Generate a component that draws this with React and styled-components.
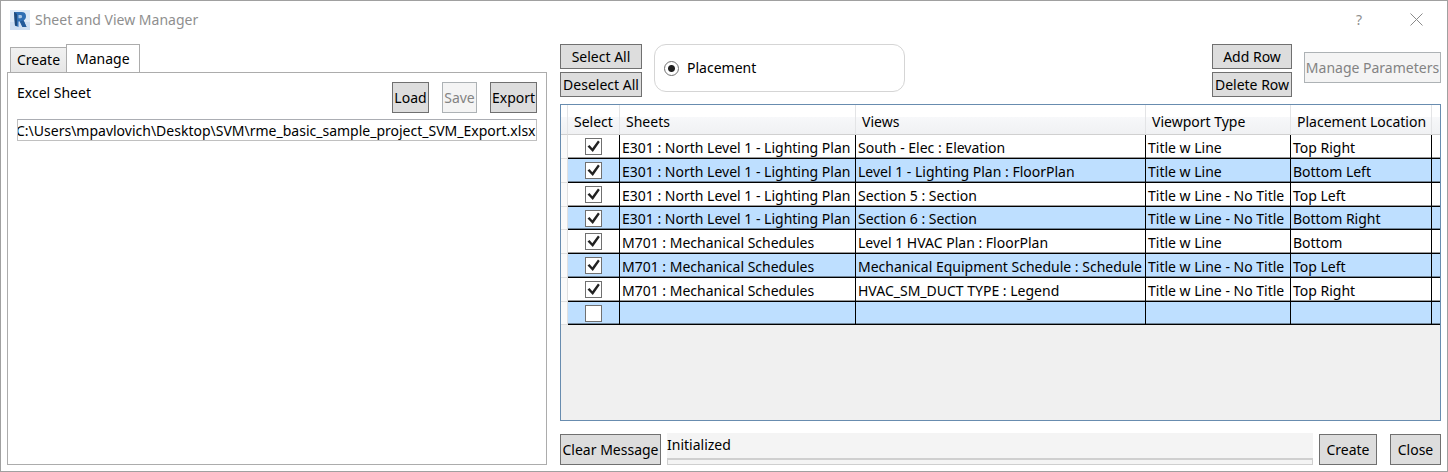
import React, { useLayoutEffect, useRef, useState } from 'react';
import styled, { createGlobalStyle, css } from 'styled-components';

const GlobalStyle = createGlobalStyle`
  *, *::before, *::after { box-sizing: border-box; }
  body {
    margin: 0;
    background: #fff;
    color: #000;
    font: 14px/20px "Noto Sans", "Open Sans", sans-serif;
  }
  button, input { font: inherit; color: inherit; }
`;

const Window = styled.div`
  display: flex;
  flex-direction: column;
  min-height: 100vh;
  border: 1px solid #a0a0a0;
  background: #fff;
`;

const TitleBar = styled.header`
  display: flex;
  align-items: center;
  height: 37px;
  padding: 0 9px;
  color: #8f8f8f;
`;

const AppIcon = styled.svg`
  width: 20px;
  height: 20px;
  margin-right: 5px;
`;

const Title = styled.h1`
  flex: 1;
  margin: 0;
  font-size: 14px;
  font-weight: 400;
`;

const CaptionButton = styled.button`
  display: grid;
  place-items: center;
  width: 44px;
  height: 28px;
  margin-left: 13px;
  padding: 0;
  border: 0;
  background: none;
`;

const Main = styled.main`
  flex: 1;
  display: grid;
  grid-template-columns: minmax(0, 540fr) minmax(0, 881fr);
  gap: 13px;
  padding: 6px;
`;

const Column = styled.section`
  display: flex;
  flex-direction: column;
  min-width: 0;
`;

const TabList = styled.div`
  display: flex;
  align-items: flex-end;
  height: 29px;
  padding-left: 3px;
`;

const Tab = styled.button`
  height: 26px;
  padding: 0 6px;
  border: 1px solid #acacac;
  border-width: 1px 0 1px 1px;
  background: linear-gradient(#f1f1f1, #e6e6e6);
  line-height: 22px;
  ${(p) => p.$active && css`
    height: 29px;
    padding: 0 9px;
    border-width: 1px 1px 0;
    background: #fff;
  `}
`;

const TabPanel = styled.div`
  flex: 1;
  display: flex;
  flex-direction: column;
  gap: 6px;
  margin-top: -1px;
  padding: 9px;
  border: 1px solid #acacac;
`;

const PanelHeader = styled.div`
  display: flex;
  align-items: flex-start;
  gap: 13px;
`;

const FieldLabel = styled.label`
  flex: 1;
  line-height: 22px;
`;

const Button = styled.button`
  height: ${(p) => (p.$compact ? 25 : 31)}px;
  min-width: ${(p) => p.$width}px;
  padding: 1px 0 0;
  border: 1px solid #707070;
  background: #ddd;
  line-height: 20px;
  white-space: nowrap;
  &:disabled {
    border-color: #adb2b5;
    background: #f4f4f4;
    color: #838383;
  }
`;

const PathInput = styled.input`
  width: 100%;
  height: 22px;
  padding: 0;
  border: 1px solid #c0c0c0;
  border-top-color: #abadb3;
  background: #fff;
  outline: 0;
`;

const Toolbar = styled.div`
  display: flex;
  align-items: flex-start;
  gap: 12px;
  margin-bottom: 7px;
`;

const ButtonStack = styled.div`
  display: flex;
  flex-direction: column;
  gap: 3px;
`;

const ModeGroup = styled.div`
  display: flex;
  align-items: center;
  width: 251px;
  height: 48px;
  margin-right: auto;
  padding: 0 9px;
  border: 1px solid #d5d5d5;
  border-radius: 12px;
`;

const RadioLabel = styled.label`
  display: flex;
  align-items: center;
  gap: 8px;
`;

const Radio = styled.input`
  appearance: none;
  width: 15px;
  height: 15px;
  margin: 0;
  border: 1px solid #707070;
  border-radius: 50%;
  background: #fff;
  &:checked {
    background: radial-gradient(circle, #212121 3px, #fff 4px);
  }
`;

const Centered = styled.div`
  padding-top: 8px;
`;

const GridFrame = styled.div`
  flex: 1;
  margin-bottom: 12px;
  border: 1px solid #688caf;
  background: #f0f0f0;
  overflow: hidden;
`;

const Table = styled.table`
  width: 100%;
  table-layout: fixed;
  border-collapse: separate;
  border-spacing: 0;
`;

const Col = styled.col`
  width: ${(p) => (p.$width ? `${p.$width}px` : 'auto')};
`;

const HeadCell = styled.th`
  height: 30px;
  padding: 4px 6px 0;
  border-right: 1px solid #e3e4e6;
  border-bottom: 1px solid #d0d0d0;
  background: linear-gradient(#fff 0 40%, #f7f8fa 40%, #f0f1f3);
  font-weight: 400;
  text-align: left;
  white-space: nowrap;
  &:last-child { border-right: 0; }
`;

const Row = styled.tr`
  height: 24px;
  background: ${(p) => (p.$alternate ? '#bedfff' : '#fff')};
  &:nth-child(4n) { height: 23px; }
`;

const RowHeader = styled.td`
  padding: 0;
  border-right: 1px solid #e0e0e0;
  border-bottom: 1px solid #e0e0e0;
  background: #fafafa;
`;

const Cell = styled.td`
  padding: ${(p) => (p.$check ? '0' : '2px 0 0 2px')};
  border-right: 1px solid #000;
  border-bottom: 1px solid #000;
  box-shadow: inset 0 -1px rgba(0, 0, 0, 0.4);
  line-height: 20px;
  overflow: hidden;
  white-space: nowrap;
  &:last-child { border-right: 0; }
`;

const CheckHolder = styled.div`
  display: flex;
  justify-content: center;
`;

const CheckBox = styled.input`
  appearance: none;
  width: 17px;
  height: 17px;
  margin: 0;
  border: 1px solid #707070;
  background: #fff;
  grid-area: 1 / 1;
`;

const CheckLabel = styled.label`
  display: grid;
  place-items: center;
`;

const CheckMark = styled.svg`
  grid-area: 1 / 1;
  width: 17px;
  height: 17px;
  pointer-events: none;
`;

const Footer = styled.footer`
  display: flex;
  align-items: flex-end;
  gap: 6px;
`;

const Status = styled.div`
  flex: 1;
  display: flex;
  flex-direction: column;
  justify-content: space-between;
  height: 32px;
  background: #f4f4f4;
  line-height: 24px;
`;

const ProgressTrack = styled.div`
  height: 7px;
  border: 1px solid #cfcfcf;
  border-top-width: 2px;
  background: #f4f4f4;
`;

const FooterActions = styled.div`
  display: flex;
  gap: 13px;
`;

const initialRows = [
  ['E301 : North Level 1 - Lighting Plan', 'South - Elec : Elevation', 'Title w Line', 'Top Right'],
  ['E301 : North Level 1 - Lighting Plan', 'Level 1 - Lighting Plan : FloorPlan', 'Title w Line', 'Bottom Left'],
  ['E301 : North Level 1 - Lighting Plan', 'Section 5 : Section', 'Title w Line - No Title', 'Top Left'],
  ['E301 : North Level 1 - Lighting Plan', 'Section 6 : Section', 'Title w Line - No Title', 'Bottom Right'],
  ['M701 : Mechanical Schedules', 'Level 1 HVAC Plan : FloorPlan', 'Title w Line', 'Bottom'],
  ['M701 : Mechanical Schedules', 'Mechanical Equipment Schedule : Schedule', 'Title w Line - No Title', 'Top Left'],
  ['M701 : Mechanical Schedules', 'HVAC_SM_DUCT TYPE : Legend', 'Title w Line - No Title', 'Top Right'],
  ['', '', '', ''],
];

function RowCheck({ checked, onChange, label }) {
  return (
    <CheckHolder>
      <CheckLabel>
        <CheckBox type="checkbox" checked={checked} onChange={onChange} aria-label={label} />
        {checked && (
          <CheckMark viewBox="0 0 17 17" aria-hidden="true">
            <path d="M2.500 8.600 4.500 7l2.800 3.200L13 2.600l1.800 1.300-7 10.100z" fill="#212121" />
          </CheckMark>
        )}
      </CheckLabel>
    </CheckHolder>
  );
}

export default function App() {
  const [checks, setChecks] = useState(initialRows.map((r) => r[0] !== ''));
  const pathRef = useRef(null);

  useLayoutEffect(() => {
    pathRef.current.scrollLeft = pathRef.current.scrollWidth;
  }, []);

  const toggle = (i) => setChecks(checks.map((c, n) => (n === i ? !c : c)));

  return (
    <>
      <GlobalStyle />
      <Window>
        <TitleBar>
          <AppIcon viewBox="0 0 20 20" aria-hidden="true">
            <rect width="20" height="20" fill="#dde9f7" />
            <path d="M0 12h20v8H0z" fill="#cfdff2" />
            <path d="M4 2h7.500c3 0 4.500 1.600 4.500 4.200 0 2-.9 3.400-2.400 4L16.500 17h-4L9.800 11.500H8.500V17L5 15.500z" fill="#2f6fb5" />
            <path d="M8.500 5v3.200h2c1 0 1.600-.6 1.600-1.600S11.500 5 10.500 5z" fill="#a9c6e6" />
            <path d="M4 2l3 2v12.300l-2-.8z" fill="#1f4a7c" />
            <path d="M9.800 11.500l3.800-1.300L16.500 17h-4z" fill="#235a99" />
          </AppIcon>
          <Title>Sheet and View Manager</Title>
          <CaptionButton type="button">?</CaptionButton>
          <CaptionButton type="button" aria-label="Close window">
            <svg width="13" height="13" viewBox="0 0 13 13" aria-hidden="true">
              <path d="M.5.5l12 12M12.500.5l-12 12" stroke="#8a8a8a" fill="none" />
            </svg>
          </CaptionButton>
        </TitleBar>
        <Main>
          <Column>
            <TabList role="tablist">
              <Tab type="button" role="tab" aria-selected="false">Create</Tab>
              <Tab type="button" role="tab" aria-selected="true" $active>Manage</Tab>
            </TabList>
            <TabPanel role="tabpanel">
              <PanelHeader>
                <FieldLabel htmlFor="excel-path">Excel Sheet</FieldLabel>
                <Button type="button" $width={37}>Load</Button>
                <Button type="button" $width={35} disabled>Save</Button>
                <Button type="button" $width={47}>Export</Button>
              </PanelHeader>
              <PathInput
                id="excel-path"
                ref={pathRef}
                defaultValue="C:\Users\mpavlovich\Desktop\SVM\rme_basic_sample_project_SVM_Export.xlsx"
              />
            </TabPanel>
          </Column>
          <Column>
            <Toolbar>
              <ButtonStack>
                <Button type="button" $compact $width={82} onClick={() => setChecks(checks.map(() => true))}>Select All</Button>
                <Button type="button" $compact $width={82} onClick={() => setChecks(checks.map(() => false))}>Deselect All</Button>
              </ButtonStack>
              <ModeGroup>
                <RadioLabel>
                  <Radio type="radio" name="mode" defaultChecked />
                  Placement
                </RadioLabel>
              </ModeGroup>
              <ButtonStack>
                <Button type="button" $compact $width={80}>Add Row</Button>
                <Button type="button" $compact $width={80}>Delete Row</Button>
              </ButtonStack>
              <Centered>
                <Button type="button" $width={137} disabled>Manage Parameters</Button>
              </Centered>
            </Toolbar>
            <GridFrame>
              <Table>
                <colgroup>
                  <Col $width={7} />
                  <Col $width={52} />
                  <Col $width={236} />
                  <Col $width={290} />
                  <Col $width={145} />
                  <Col $width={141} />
                  <Col />
                </colgroup>
                <thead>
                  <tr>
                    <HeadCell as="td" />
                    <HeadCell>Select</HeadCell>
                    <HeadCell>Sheets</HeadCell>
                    <HeadCell>Views</HeadCell>
                    <HeadCell>Viewport Type</HeadCell>
                    <HeadCell>Placement Location</HeadCell>
                    <HeadCell as="td" />
                  </tr>
                </thead>
                <tbody>
                  {initialRows.map((row, i) => (
                    <Row key={i} $alternate={i % 2 === 1}>
                      <RowHeader />
                      <Cell $check>
                        <RowCheck checked={checks[i]} onChange={() => toggle(i)} label={`Select row ${i + 1}`} />
                      </Cell>
                      {row.map((text, c) => <Cell key={c}>{text}</Cell>)}
                      <Cell />
                    </Row>
                  ))}
                </tbody>
              </Table>
            </GridFrame>
            <Footer>
              <Button type="button" $width={101}>Clear Message</Button>
              <Status role="status">
                Initialized
                <ProgressTrack />
              </Status>
              <FooterActions>
                <Button type="button" $width={58}>Create</Button>
                <Button type="button" $width={51}>Close</Button>
              </FooterActions>
            </Footer>
          </Column>
        </Main>
      </Window>
    </>
  );
}
